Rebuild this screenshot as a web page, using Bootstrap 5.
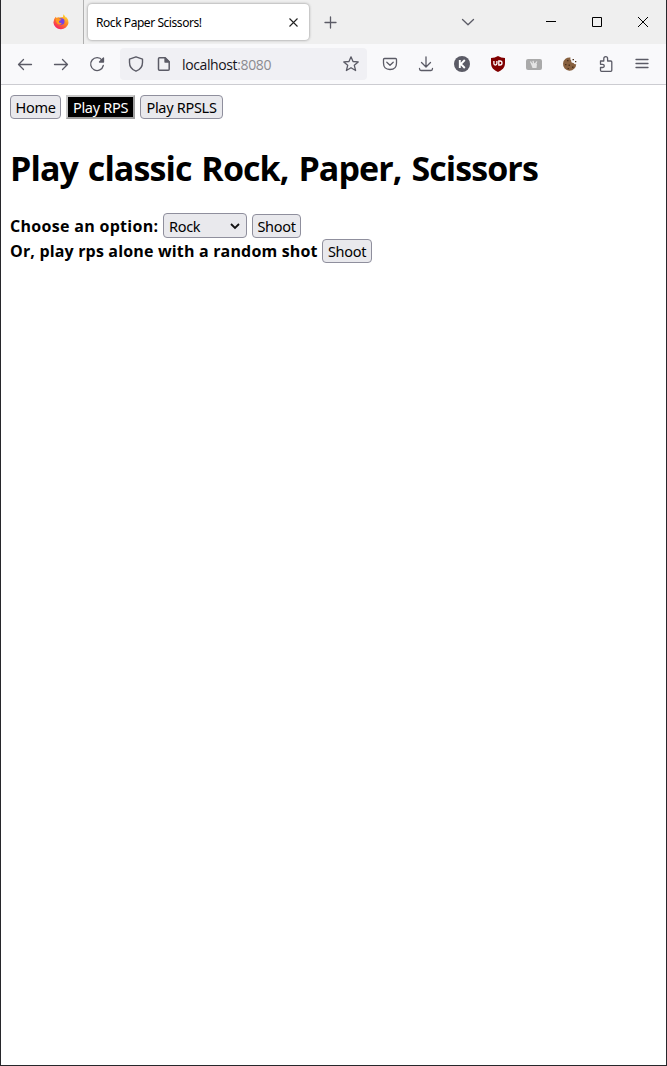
<!DOCTYPE html>
<html lang="en">
<head>
<meta charset="utf-8">
<meta name="viewport" content="width=device-width, initial-scale=1">
<title>Rock Paper Scissors!</title>
<link href="https://cdn.jsdelivr.net/npm/bootstrap@5.3.0/dist/css/bootstrap.min.css" rel="stylesheet">
<style>
body{font-family:"Open Sans","Noto Sans",sans-serif;color:#000;overflow:hidden}
svg{display:block;flex:none}
.window-frame{height:1066px;border:1px solid #27272b;border-top:0}
.tab-strip{height:44px;background:#efefef}
.pinned{width:83px;border-right:1px solid #b0b0b0;padding-left:52px}
.tab-active{width:221px;height:36px;margin:0 0 0 4px;border-radius:4px;background:#fff;box-shadow:0 0 3px rgba(0,0,0,.45);padding:0 9px 0 8px}
.tab-title{font:12px/16px "Noto Sans",sans-serif;letter-spacing:-.44px;padding-top:2px}
.tool-row{height:41px;background:#f9f9fb;border-bottom:1px solid #ccccd1;padding-left:6px}
.tool{width:36px;display:flex;justify-content:center;flex:none}
.url-field{width:247px;height:32px;margin-left:5px;margin-right:5px;border-radius:4px;background:#f0f0f4;padding:0 8px}
.url-text{font:14px/20px "Open Sans",sans-serif;letter-spacing:-.38px;margin-left:10px;padding-top:2px;color:#15141a}
.url-text span{color:#8b8b90}
.ic{fill:none;stroke:#5b5b66;stroke-width:1.3;stroke-linecap:round;stroke-linejoin:round}
.page{padding:10px 9px}
.ctl{height:24px;border:1px solid #8f8f9d;border-radius:4px;background:#e9e9ed;color:#000;font:14.5px/22px "Noto Sans",sans-serif;letter-spacing:-.3px;padding:0;text-align:center;white-space:nowrap;flex:none}
.ctl-on{background:#000;color:#fff;border:2px solid;border-color:#c8c8c8 #a0a0a0 #a0a0a0 #c8c8c8;border-radius:0;line-height:20px}
.w-home{width:51px}.w-rps{width:69px}.w-ls{width:83px}.w-sel{width:84px;height:25px}.w-sh{width:49px}.w-sh2{width:50px}
.heading{font-size:34px;line-height:48px;font-weight:700;letter-spacing:-.92px;word-spacing:2px;margin:25px 0 21px;white-space:nowrap}
.line-row{height:25px;gap:5px;font-size:16px;font-weight:700;white-space:nowrap}
.t-one{letter-spacing:.3px;width:148px}
.t-two{letter-spacing:.17px;width:307px}
</style>
</head>
<body>
<div class="window-frame bg-white">
 <header>
  <div class="tab-strip d-flex align-items-center">
   <div class="pinned h-100 d-flex align-items-center">
    <svg width="16" height="16" viewBox="0 0 16 16"><defs><linearGradient id="fx" x1=".85" y1="0" x2=".2" y2="1"><stop offset="0" stop-color="#ffe640"/><stop offset=".45" stop-color="#ff8a1f"/><stop offset="1" stop-color="#f5156c"/></linearGradient></defs><path fill="url(#fx)" d="M2.800 2.700 3.600 4Q5 3 6.500 3.500L10 3 10.300.2Q12 1.500 12.600 3.200l1.100.3Q15.800 6 15.500 9A7.600 7.200 0 0 1 .4 8.500Q.4 5 2.800 2.700z"/><circle cx="8.200" cy="7.500" r="3.300" fill="#7542e5"/><path fill="#ff9a20" d="M2.600 4.200Q5 3.300 6.400 5l2 .2Q8 6.400 6.500 6.700 5.500 7.500 6.200 8.500q1.400 1 2.800.2-.6 1.800-2.800 1.800Q3 10 2.600 4.200z"/></svg>
   </div>
   <div class="tab-active d-flex align-items-center justify-content-between">
    <span class="tab-title">Rock Paper Scissors!</span>
    <svg width="13" height="13" viewBox="0 0 13 13"><path d="M2.500 2.500l8 8m0-8l-8 8" fill="none" stroke="#222" stroke-width="1.100"/></svg>
   </div>
   <svg class="ic" style="margin-left:15px" width="13" height="14" viewBox="0 0 13 14"><path d="M6.500 2v11M1 7.500h11"/></svg>
   <svg class="ic" style="margin-left:124px" width="14" height="14" viewBox="0 0 14 14"><path d="M1.500 4.500L7 9.700l5.500-5.200"/></svg>
   <svg style="margin-left:70px" width="12" height="12" viewBox="0 0 12 12"><path d="M1 5.500h10" stroke="#000"/></svg>
   <svg style="margin-left:34px" width="12" height="12" viewBox="0 0 12 12"><path d="M1.500 1.500h9v9h-9z" fill="none" stroke="#000"/></svg>
   <svg style="margin-left:34px" width="12" height="12" viewBox="0 0 12 12"><path d="M1 1l10 10m0-10L1 11" stroke="#000"/></svg>
  </div>
  <div class="tool-row d-flex align-items-center">
   <div class="tool"><svg class="ic" width="16" height="16" viewBox="0 0 16 16"><path d="M14.500 8.500H1.500m5-5l-5 5 5 5"/></svg></div>
   <div class="tool"><svg class="ic" width="16" height="16" viewBox="0 0 16 16"><path d="M1.500 8.500h13m-5-5l5 5-5 5"/></svg></div>
   <div class="tool"><svg class="ic" width="16" height="16" viewBox="0 0 16 16"><path d="M13.200 4.300A6.400 6.400 0 1 0 14.300 9.500"/><path d="M14.500 2v4h-4z" fill="#5b5b66"/></svg></div>
   <div class="url-field d-flex align-items-center">
    <svg class="ic" width="16" height="16" viewBox="0 0 16 16"><path stroke-width="1.400" d="M8 .8l6.500 2.400v3.300c0 4-2.500 7.200-6.500 8.700-4-1.500-6.500-4.700-6.500-8.700V3.200z"/></svg>
    <svg class="ic" style="margin-left:12px" width="16" height="16" viewBox="0 0 16 16"><path stroke-width="1.500" d="M3.500 1.700h5.700l4 4v7.600q0 1-1 1H3.500q-1 0-1-1V2.700q0-1 1-1z"/><path d="M9 2v4h4z" fill="#5b5b66"/></svg>
    <div class="url-text flex-grow-1">localhost<span>:8080</span></div>
    <svg class="ic" width="16" height="16" viewBox="0 0 16 16"><path d="M8 .8l2 4.700 5.200.4-3.900 3.400 1.300 5.200L8 11.700l-4.600 2.800 1.300-5.200L.8 5.900 6 5.500z"/></svg>
   </div>
   <div class="tool"><svg class="ic" width="16" height="16" viewBox="0 0 16 16"><path d="M2.500 2.500h11q1 0 1 1V7q0 6.500-6.500 6.500T1.500 7V3.500q0-1 1-1z"/><path d="M4.800 6.300L8 9.300l3.200-3"/></svg></div>
   <div class="tool"><svg class="ic" width="16" height="16" viewBox="0 0 16 16"><path d="M8 .8v10M3.500 6.500L8 11l4.500-4.500M1.500 12.500q0 2 1.500 2h10q1.500 0 1.500-2"/></svg></div>
   <div class="tool"><svg width="16" height="16" viewBox="0 0 16 16"><circle cx="8" cy="8" r="8" fill="#5b5b66"/><path d="M5.800 4v8M10.800 4l-4 4 4 4" fill="none" stroke="#fff" stroke-width="1.900"/></svg></div>
   <div class="tool"><svg width="16" height="16" viewBox="0 0 16 16"><path fill="#800000" d="M8 0q3 2 7 2v5c0 5-3 7-7 9-4-2-7-4-7-9V2q4 0 7-2z"/><path d="M3.900 5v2.500q0 1.500 1.500 1.500t1.500-1.500V5m1.900 0v4h1.200q2 0 2-2t-2-2z" fill="none" stroke="#fff" stroke-width="1.300"/></svg></div>
   <div class="tool"><svg width="16" height="16" viewBox="0 0 16 16"><rect y="3" width="16" height="11" rx="2" fill="#aaa"/><path d="M4.500 5.500l1.200 2.500M7 4.800l.6 3M11 5.500L9 8" fill="none" stroke="#eee" stroke-width="1.100"/><path d="M5 8l2-1 4 .5-.5 4.500H6.500z" fill="#e4e4e4"/></svg></div>
   <div class="tool"><svg width="16" height="16" viewBox="0 0 16 16"><path fill="#87603f" d="M8.500 1.500q-.8 2 .7 3-.2 2.600 2.400 2.500 1 1.800 2.600 1A6.600 6.600 0 1 1 8.500 1.500z"/><path d="M5 4h1.500v1.300H5zM3 8h1.500v1.300H3zM6.500 8.500H8V10H6.500zM10 10.500h1.500V12H10zM5.500 12H7v1.200H5.500zM10.500 3H12v1.200h-1.500zM13 5h1.300v1.200H13z" fill="#4e321e"/></svg></div>
   <div class="tool"><svg class="ic" width="16" height="16" viewBox="0 0 16 16"><path d="M2.500 5h3.300V2.700q0-2 1.900-2t1.900 2V5h3.200q1 0 1 1v8.300q0 1-1 1h-9.300q-1 0-1-1V11.500h2q1.700 0 1.700-1.600T4.500 8.300h-2V6q0-1 0-1z"/></svg></div>
   <div class="tool"><svg class="ic" width="16" height="16" viewBox="0 0 16 16"><path d="M2 3.500h12M2 7.500h12M2 11.500h12"/></svg></div>
  </div>
 </header>
 <main class="page">
  <nav class="d-flex" style="gap:5px">
   <button class="ctl w-home">Home</button><button class="ctl ctl-on w-rps">Play RPS</button><button class="ctl w-ls">Play RPSLS</button>
  </nav>
  <h1 class="heading">Play classic Rock, Paper, Scissors</h1>
  <div class="line-row d-flex align-items-center"><span class="t-one">Choose an option:</span>
   <button class="ctl w-sel d-flex align-items-center justify-content-between ps-1 pe-1"><span style="padding-left:1px">Rock</span><svg width="14" height="12" viewBox="0 0 14 12"><path d="M3 4l4 4 4-4" fill="none" stroke="#111" stroke-width="1.800"/></svg></button>
   <button class="ctl w-sh">Shoot</button></div>
  <div class="line-row d-flex align-items-center"><span class="t-two">Or, play rps alone with a random shot</span>
   <button class="ctl w-sh2">Shoot</button></div>
 </main>
</div>
<script src="https://cdn.jsdelivr.net/npm/bootstrap@5.3.0/dist/js/bootstrap.bundle.min.js"></script>
</body>
</html>
